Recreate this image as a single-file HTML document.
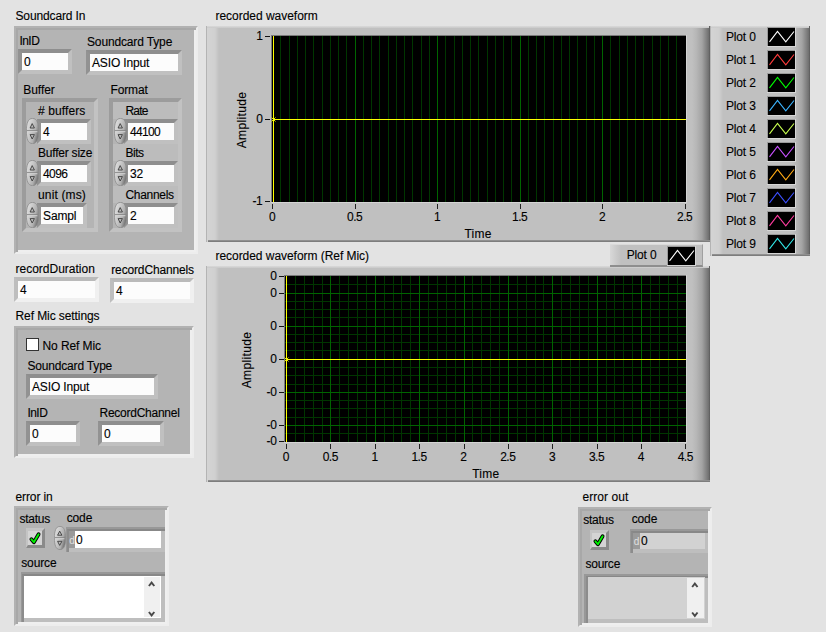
<!DOCTYPE html>
<html><head><meta charset="utf-8"><title>Soundcard In</title><style>
html,body{margin:0;padding:0}
body{width:826px;height:632px;background:#e3e3e3;position:relative;overflow:hidden;
 font-family:"Liberation Sans",sans-serif;font-size:12px;color:#000;-webkit-text-stroke:0.12px currentColor}
.a{position:absolute}
.l{position:absolute;white-space:pre;line-height:14px;height:14px}
.cl{position:absolute;box-sizing:border-box;background:#b4b4b4;border:2px solid;border-color:#b2b2b2 #ededed #ededed #b2b2b2;box-shadow:inset 2px 2px 0 #a8a8a8,inset -2px -2px 0 #efefef}
.cn{position:absolute;box-sizing:border-box;background:#b4b4b4;border:4px solid;border-color:#9c9c9c #c2c2c2 #c2c2c2 #9c9c9c}
.f{position:absolute;box-sizing:content-box;background:#fcfcfc;border:4px solid;border-color:#8e8e8e #c0c0c0 #c0c0c0 #929292;
 padding-left:2px;white-space:pre;overflow:hidden}
.f span{position:relative;top:1px}
.fo{border-color:#bababa #f0f0f0 #f0f0f0 #bebebe}
.lb{background:#bcbcbc}
.rx{position:absolute;background:#9a9a9a;color:#e0e0e0;font-size:10px;text-align:center;-webkit-text-stroke:0}
svg{position:absolute}
</style></head>
<body>
<div class="l " style="left:15.5px;top:9px;letter-spacing:-0.135px;">Soundcard In</div>
<div class="cl" style="left:14px;top:26px;width:184px;height:228px"></div>
<div class="l " style="left:19.5px;top:34px;letter-spacing:-0.569px;">InID</div>
<div class="f " style="left:18px;top:49px;width:44px;height:17px;line-height:17px;"><span>0</span></div>
<div class="l " style="left:87px;top:35px;letter-spacing:-0.144px;">Soundcard Type</div>
<div class="f " style="left:86px;top:50px;width:86px;height:17px;line-height:17px;letter-spacing:-0.15px;"><span>ASIO Input</span></div>
<div class="l " style="left:23.25px;top:83px;letter-spacing:-0.050px;">Buffer</div>
<div class="l " style="left:110.5px;top:83px;letter-spacing:-0.141px;">Format</div>
<div class="cn" style="left:22px;top:98px;width:76px;height:134px"></div>
<div class="cn" style="left:109px;top:98px;width:73px;height:134px"></div>
<div class="a lb" style="left:113px;top:102px;width:65px;height:17px"></div>
<div class="a lb" style="left:113px;top:144px;width:65px;height:17px"></div>
<div class="a lb" style="left:113px;top:186px;width:65px;height:17px"></div>
<div class="l " style="left:38px;top:104px;letter-spacing:0.103px;"># buffers</div>
<div class="l " style="left:38px;top:146px;letter-spacing:-0.217px;">Buffer size</div>
<div class="l " style="left:38px;top:188px;letter-spacing:0.141px;">unit (ms)</div>
<div class="l " style="left:125.5px;top:104px;letter-spacing:-0.849px;">Rate</div>
<div class="l " style="left:125.5px;top:146px;letter-spacing:-0.485px;">Bits</div>
<div class="l " style="left:125.5px;top:188px;letter-spacing:-0.307px;">Channels</div>
<div class="f " style="left:37px;top:119px;width:44px;height:17px;line-height:17px;"><span>4</span></div>
<div class="f " style="left:124px;top:119px;width:44px;height:17px;line-height:17px;letter-spacing:-0.7px;"><span>44100</span></div>
<svg style="left:25.6px;top:117.9px" width="13" height="26" viewBox="0 0 13 26">
<defs><linearGradient id="sg21" x1="0" y1="0.25" x2="1" y2="0.75"><stop offset="0" stop-color="#dedede"/><stop offset="0.35" stop-color="#cacaca"/><stop offset="0.68" stop-color="#b0b0b0"/><stop offset="0.9" stop-color="#7c7c7c"/><stop offset="1" stop-color="#5a5a5a"/></linearGradient></defs>
<path d="M6.5 0.4 C10.92 0.4 12.6 5.20 12.6 13.00 C12.6 20.80 10.92 25.6 6.5 25.6 C2.08 25.6 0.4 20.80 0.4 13.00 C0.4 5.20 2.08 0.4 6.5 0.4Z" fill="url(#sg21)" stroke="#8c8c8c" stroke-width="0.8"/>
<path d="M0.8 12.7 H12.2" stroke="#868686" stroke-width="1"/>
<path d="M1 13.7 H11.4" stroke="#d8d8d8" stroke-width="0.9"/>
<path d="M4.1 10.00 L6.2 5.60 L8.4 10.00 Z" fill="#bcbcbc" stroke="#3c3c3c" stroke-width="0.9"/>
<path d="M4.1 16.60 L6.2 21.00 L8.4 16.60 Z" fill="#bcbcbc" stroke="#3c3c3c" stroke-width="0.9"/>
</svg>
<svg style="left:113.6px;top:117.9px" width="13" height="26" viewBox="0 0 13 26">
<defs><linearGradient id="sg22" x1="0" y1="0.25" x2="1" y2="0.75"><stop offset="0" stop-color="#dedede"/><stop offset="0.35" stop-color="#cacaca"/><stop offset="0.68" stop-color="#b0b0b0"/><stop offset="0.9" stop-color="#7c7c7c"/><stop offset="1" stop-color="#5a5a5a"/></linearGradient></defs>
<path d="M6.5 0.4 C10.92 0.4 12.6 5.20 12.6 13.00 C12.6 20.80 10.92 25.6 6.5 25.6 C2.08 25.6 0.4 20.80 0.4 13.00 C0.4 5.20 2.08 0.4 6.5 0.4Z" fill="url(#sg22)" stroke="#8c8c8c" stroke-width="0.8"/>
<path d="M0.8 12.7 H12.2" stroke="#868686" stroke-width="1"/>
<path d="M1 13.7 H11.4" stroke="#d8d8d8" stroke-width="0.9"/>
<path d="M4.1 10.00 L6.2 5.60 L8.4 10.00 Z" fill="#bcbcbc" stroke="#3c3c3c" stroke-width="0.9"/>
<path d="M4.1 16.60 L6.2 21.00 L8.4 16.60 Z" fill="#bcbcbc" stroke="#3c3c3c" stroke-width="0.9"/>
</svg>
<div class="f " style="left:37px;top:161px;width:44px;height:17px;line-height:17px;letter-spacing:-0.55px;"><span>4096</span></div>
<div class="f " style="left:124px;top:161px;width:44px;height:17px;line-height:17px;letter-spacing:-0.1px;"><span>32</span></div>
<svg style="left:25.6px;top:159.9px" width="13" height="26" viewBox="0 0 13 26">
<defs><linearGradient id="sg25" x1="0" y1="0.25" x2="1" y2="0.75"><stop offset="0" stop-color="#dedede"/><stop offset="0.35" stop-color="#cacaca"/><stop offset="0.68" stop-color="#b0b0b0"/><stop offset="0.9" stop-color="#7c7c7c"/><stop offset="1" stop-color="#5a5a5a"/></linearGradient></defs>
<path d="M6.5 0.4 C10.92 0.4 12.6 5.20 12.6 13.00 C12.6 20.80 10.92 25.6 6.5 25.6 C2.08 25.6 0.4 20.80 0.4 13.00 C0.4 5.20 2.08 0.4 6.5 0.4Z" fill="url(#sg25)" stroke="#8c8c8c" stroke-width="0.8"/>
<path d="M0.8 12.7 H12.2" stroke="#868686" stroke-width="1"/>
<path d="M1 13.7 H11.4" stroke="#d8d8d8" stroke-width="0.9"/>
<path d="M4.1 10.00 L6.2 5.60 L8.4 10.00 Z" fill="#bcbcbc" stroke="#3c3c3c" stroke-width="0.9"/>
<path d="M4.1 16.60 L6.2 21.00 L8.4 16.60 Z" fill="#bcbcbc" stroke="#3c3c3c" stroke-width="0.9"/>
</svg>
<svg style="left:113.6px;top:159.9px" width="13" height="26" viewBox="0 0 13 26">
<defs><linearGradient id="sg26" x1="0" y1="0.25" x2="1" y2="0.75"><stop offset="0" stop-color="#dedede"/><stop offset="0.35" stop-color="#cacaca"/><stop offset="0.68" stop-color="#b0b0b0"/><stop offset="0.9" stop-color="#7c7c7c"/><stop offset="1" stop-color="#5a5a5a"/></linearGradient></defs>
<path d="M6.5 0.4 C10.92 0.4 12.6 5.20 12.6 13.00 C12.6 20.80 10.92 25.6 6.5 25.6 C2.08 25.6 0.4 20.80 0.4 13.00 C0.4 5.20 2.08 0.4 6.5 0.4Z" fill="url(#sg26)" stroke="#8c8c8c" stroke-width="0.8"/>
<path d="M0.8 12.7 H12.2" stroke="#868686" stroke-width="1"/>
<path d="M1 13.7 H11.4" stroke="#d8d8d8" stroke-width="0.9"/>
<path d="M4.1 10.00 L6.2 5.60 L8.4 10.00 Z" fill="#bcbcbc" stroke="#3c3c3c" stroke-width="0.9"/>
<path d="M4.1 16.60 L6.2 21.00 L8.4 16.60 Z" fill="#bcbcbc" stroke="#3c3c3c" stroke-width="0.9"/>
</svg>
<div class="f " style="left:37px;top:203px;width:40px;height:17px;line-height:17px;letter-spacing:-0.12px;"><span>Sampl</span></div>
<div class="f " style="left:124px;top:203px;width:44px;height:17px;line-height:17px;"><span>2</span></div>
<svg style="left:25.6px;top:201.9px" width="13" height="26" viewBox="0 0 13 26">
<defs><linearGradient id="sg29" x1="0" y1="0.25" x2="1" y2="0.75"><stop offset="0" stop-color="#dedede"/><stop offset="0.35" stop-color="#cacaca"/><stop offset="0.68" stop-color="#b0b0b0"/><stop offset="0.9" stop-color="#7c7c7c"/><stop offset="1" stop-color="#5a5a5a"/></linearGradient></defs>
<path d="M6.5 0.4 C10.92 0.4 12.6 5.20 12.6 13.00 C12.6 20.80 10.92 25.6 6.5 25.6 C2.08 25.6 0.4 20.80 0.4 13.00 C0.4 5.20 2.08 0.4 6.5 0.4Z" fill="url(#sg29)" stroke="#8c8c8c" stroke-width="0.8"/>
<path d="M0.8 12.7 H12.2" stroke="#868686" stroke-width="1"/>
<path d="M1 13.7 H11.4" stroke="#d8d8d8" stroke-width="0.9"/>
<path d="M4.1 10.00 L6.2 5.60 L8.4 10.00 Z" fill="#bcbcbc" stroke="#3c3c3c" stroke-width="0.9"/>
<path d="M4.1 16.60 L6.2 21.00 L8.4 16.60 Z" fill="#bcbcbc" stroke="#3c3c3c" stroke-width="0.9"/>
</svg>
<svg style="left:113.6px;top:201.9px" width="13" height="26" viewBox="0 0 13 26">
<defs><linearGradient id="sg30" x1="0" y1="0.25" x2="1" y2="0.75"><stop offset="0" stop-color="#dedede"/><stop offset="0.35" stop-color="#cacaca"/><stop offset="0.68" stop-color="#b0b0b0"/><stop offset="0.9" stop-color="#7c7c7c"/><stop offset="1" stop-color="#5a5a5a"/></linearGradient></defs>
<path d="M6.5 0.4 C10.92 0.4 12.6 5.20 12.6 13.00 C12.6 20.80 10.92 25.6 6.5 25.6 C2.08 25.6 0.4 20.80 0.4 13.00 C0.4 5.20 2.08 0.4 6.5 0.4Z" fill="url(#sg30)" stroke="#8c8c8c" stroke-width="0.8"/>
<path d="M0.8 12.7 H12.2" stroke="#868686" stroke-width="1"/>
<path d="M1 13.7 H11.4" stroke="#d8d8d8" stroke-width="0.9"/>
<path d="M4.1 10.00 L6.2 5.60 L8.4 10.00 Z" fill="#bcbcbc" stroke="#3c3c3c" stroke-width="0.9"/>
<path d="M4.1 16.60 L6.2 21.00 L8.4 16.60 Z" fill="#bcbcbc" stroke="#3c3c3c" stroke-width="0.9"/>
</svg>
<div class="l " style="left:15.5px;top:262px;letter-spacing:-0.005px;">recordDuration</div>
<div class="f fo" style="left:14px;top:277px;width:75px;height:17px;line-height:17px;"><span>4</span></div>
<div class="l " style="left:111.25px;top:263px;letter-spacing:-0.147px;">recordChannels</div>
<div class="f fo" style="left:110px;top:278px;width:74px;height:17px;line-height:17px;"><span>4</span></div>
<div class="l " style="left:15.5px;top:309px;letter-spacing:-0.087px;">Ref Mic settings</div>
<div class="cl" style="left:14px;top:326px;width:180px;height:132px"></div>
<div class="a" style="left:26px;top:338px;width:11px;height:11px;background:#fff;border:1px solid #333"></div>
<div class="l " style="left:42.5px;top:339px;letter-spacing:-0.088px;">No Ref Mic</div>
<div class="l " style="left:27.5px;top:359px;letter-spacing:-0.183px;">Soundcard Type</div>
<div class="f " style="left:26px;top:374px;width:122px;height:17px;line-height:17px;letter-spacing:-0.15px;"><span>ASIO Input</span></div>
<div class="l " style="left:27.5px;top:406px;letter-spacing:-0.569px;">InID</div>
<div class="f " style="left:26px;top:421px;width:44px;height:17px;line-height:17px;"><span>0</span></div>
<div class="l " style="left:99.5px;top:406px;letter-spacing:-0.257px;">RecordChannel</div>
<div class="f " style="left:98px;top:421px;width:56px;height:17px;line-height:17px;"><span>0</span></div>
<div class="l " style="left:15.5px;top:489.5px;letter-spacing:-0.102px;">error in</div>
<div class="cl" style="left:14px;top:506px;width:155px;height:120px"></div>
<div class="l " style="left:19.5px;top:512px;letter-spacing:-0.243px;">status</div>
<div class="l " style="left:66.75px;top:511px;letter-spacing:-0.157px;">code</div>
<div class="a" style="left:26px;top:528px;width:14px;height:14px;background:#d4d4d4;border-style:solid;border-width:3px 3px 3px 2px;border-color:#c4c4c4 #8a8a8a #8a8a8a #c4c4c4"></div>
<svg style="left:26px;top:528px" width="19" height="20" viewBox="0 0 19 20"><path d="M5.4 11.3 L7.9 14.2 L12.6 6.2" fill="none" stroke="#000" stroke-width="3.8" stroke-linejoin="round" stroke-linecap="round"/><path d="M5.4 11.3 L7.9 14.2 L12.6 6.2" fill="none" stroke="#00f400" stroke-width="1.8" stroke-linejoin="round" stroke-linecap="round"/></svg>
<svg style="left:54.1px;top:525.9px" width="12" height="24" viewBox="0 0 12 24">
<defs><linearGradient id="sg50" x1="0" y1="0.25" x2="1" y2="0.75"><stop offset="0" stop-color="#dedede"/><stop offset="0.35" stop-color="#cacaca"/><stop offset="0.68" stop-color="#b0b0b0"/><stop offset="0.9" stop-color="#7c7c7c"/><stop offset="1" stop-color="#5a5a5a"/></linearGradient></defs>
<path d="M6.0 0.4 C10.08 0.4 11.6 4.80 11.6 12.00 C11.6 19.20 10.08 23.6 6.0 23.6 C1.92 23.6 0.4 19.20 0.4 12.00 C0.4 4.80 1.92 0.4 6.0 0.4Z" fill="url(#sg50)" stroke="#8c8c8c" stroke-width="0.8"/>
<path d="M0.8 11.7 H11.2" stroke="#868686" stroke-width="1"/>
<path d="M1 12.7 H10.4" stroke="#d8d8d8" stroke-width="0.9"/>
<path d="M3.6 9.23 L5.7 5.17 L7.9 9.23 Z" fill="#bcbcbc" stroke="#3c3c3c" stroke-width="0.9"/>
<path d="M3.6 15.32 L5.7 19.38 L7.9 15.32 Z" fill="#bcbcbc" stroke="#3c3c3c" stroke-width="0.9"/>
</svg>
<div class="a" style="left:66px;top:527px;width:99px;height:25px;background:#bebebe;border-top:2px solid #989898;border-left:1px solid #989898;box-sizing:border-box"></div>
<div class="a" style="left:67px;top:529px;width:98px;height:23px;background:#bebebe;border-top:2px solid #888888;border-left:2px solid #8c8c8c;box-sizing:border-box"></div>
<div class="rx" style="left:69px;top:531px;width:6px;height:17px;line-height:19px">d</div>
<div class="a" style="left:75px;top:531px;width:86px;height:17px;background:#fff;line-height:18px;padding-left:1px;box-sizing:border-box">0</div>
<div class="l " style="left:21.25px;top:556px;letter-spacing:-0.143px;">source</div>
<div class="a" style="left:20.5px;top:572px;width:144.5px;height:50px;background:#bebebe;border-top:2px solid #989898;border-left:1.5px solid #989898;box-sizing:border-box"></div>
<div class="a" style="left:22.0px;top:574px;width:143.0px;height:48px;background:#bebebe;border-top:2px solid #888888;border-left:2px solid #8c8c8c;box-sizing:border-box"></div>
<div class="a" style="left:24px;top:576px;width:137px;height:42px;background:#fff"></div>
<div class="a" style="left:144px;top:577px;width:16px;height:40px;background:#f0f0f0"></div>
<svg style="left:144px;top:577px" width="16" height="40" viewBox="0 0 16 40"><path d="M4.8999999999999995 9 L7.6 5.6 L10.3 9" fill="none" stroke="#484848" stroke-width="1.9"/><path d="M4.8999999999999995 35 L7.6 38.4 L10.3 35" fill="none" stroke="#484848" stroke-width="1.9"/></svg>
<div class="l " style="left:582.5px;top:490px;letter-spacing:0.056px;">error out</div>
<div class="cl" style="left:578px;top:506.5px;width:134px;height:120px"></div>
<div class="l " style="left:583.25px;top:513px;letter-spacing:-0.243px;">status</div>
<div class="l " style="left:631.75px;top:512px;letter-spacing:-0.157px;">code</div>
<div class="a" style="left:590px;top:529.5px;width:14px;height:14px;background:#d4d4d4;border-style:solid;border-width:3px 3px 3px 2px;border-color:#c4c4c4 #8a8a8a #8a8a8a #c4c4c4"></div>
<svg style="left:590px;top:529.5px" width="19" height="20" viewBox="0 0 19 20"><path d="M5.4 11.3 L7.9 14.2 L12.6 6.2" fill="none" stroke="#000" stroke-width="3.8" stroke-linejoin="round" stroke-linecap="round"/><path d="M5.4 11.3 L7.9 14.2 L12.6 6.2" fill="none" stroke="#00f400" stroke-width="1.8" stroke-linejoin="round" stroke-linecap="round"/></svg>
<div class="a" style="left:630px;top:528.5px;width:78px;height:24px;background:#bebebe;border-top:2px solid #989898;border-left:1px solid #989898;box-sizing:border-box"></div>
<div class="a" style="left:631px;top:530.5px;width:77px;height:22px;background:#bebebe;border-top:2px solid #888888;border-left:2px solid #8c8c8c;box-sizing:border-box"></div>
<div class="rx" style="left:633px;top:532.5px;width:7px;height:16px;line-height:18px">d</div>
<div class="a" style="left:640px;top:532.5px;width:64.5px;height:16px;background:#d2d2d2;line-height:17px;padding-left:1px;box-sizing:border-box">0</div>
<div class="l " style="left:585.5px;top:556.5px;letter-spacing:-0.243px;">source</div>
<div class="a" style="left:584px;top:573.5px;width:124px;height:49px;background:#bebebe;border-top:2px solid #989898;border-left:2px solid #989898;box-sizing:border-box"></div>
<div class="a" style="left:586px;top:575.5px;width:122px;height:47px;background:#bebebe;border-top:2px solid #888888;border-left:2px solid #8c8c8c;box-sizing:border-box"></div>
<div class="a" style="left:588px;top:577px;width:116.5px;height:41.5px;background:#d2d2d2"></div>
<div class="a" style="left:687px;top:578px;width:16.5px;height:39.5px;background:#f0f0f0"></div>
<svg style="left:687px;top:578px" width="16.5" height="39.5" viewBox="0 0 16.5 39.5"><path d="M5.1499999999999995 9 L7.85 5.6 L10.55 9" fill="none" stroke="#484848" stroke-width="1.9"/><path d="M5.1499999999999995 34.5 L7.85 37.9 L10.55 34.5" fill="none" stroke="#484848" stroke-width="1.9"/></svg>
<div class="l " style="left:215.5px;top:9px;letter-spacing:-0.026px;">recorded waveform</div>
<div class="a" style="left:206px;top:26px;width:504px;height:216px;background:#c0c0c0"></div>
<div class="a" style="left:206px;top:26px;width:14px;height:216px;background:linear-gradient(90deg,#b4b4b4 0,#b4b4b4 1px,#d4d4d4 1px,#d0d0d0 9px,#c0c0c0 13px)"></div>
<div class="a" style="left:692px;top:26px;width:18px;height:216px;background:linear-gradient(90deg,#c0c0c0 0,#b6b6b6 25%,#a4a4a4 55%,#707070 93%,#585858 100%)"></div>
<div class="a" style="left:207px;top:26px;width:502px;height:2px;background:linear-gradient(180deg,#dadada,#c8c8c8)"></div>
<div class="a" style="left:208px;top:240px;width:502px;height:2px;background:linear-gradient(180deg,#989898,#747474)"></div>
<div class="l " style="left:215.5px;top:249px;letter-spacing:-0.045px;">recorded waveform (Ref Mic)</div>
<div class="a" style="left:206px;top:266px;width:504px;height:216px;background:#c0c0c0"></div>
<div class="a" style="left:206px;top:266px;width:14px;height:216px;background:linear-gradient(90deg,#b4b4b4 0,#b4b4b4 1px,#d4d4d4 1px,#d0d0d0 9px,#c0c0c0 13px)"></div>
<div class="a" style="left:692px;top:266px;width:18px;height:216px;background:linear-gradient(90deg,#c0c0c0 0,#b6b6b6 25%,#a4a4a4 55%,#707070 93%,#585858 100%)"></div>
<div class="a" style="left:207px;top:266px;width:502px;height:2px;background:linear-gradient(180deg,#dadada,#c8c8c8)"></div>
<div class="a" style="left:208px;top:480px;width:502px;height:2px;background:linear-gradient(180deg,#989898,#747474)"></div>
<svg style="left:271px;top:35px;overflow:hidden" width="416" height="168" viewBox="-1 -1 416 168" shape-rendering="crispEdges"><rect x="-1" y="-1" width="416" height="168" fill="#d4d4d4"/><rect x="-1" y="-1" width="415" height="167" fill="#7a7a7a"/><rect x="0" y="0" width="414" height="166" fill="#000"/><rect x="8" y="0" width="1" height="166" fill="#003600"/><rect x="17" y="0" width="1" height="166" fill="#003600"/><rect x="25" y="0" width="1" height="166" fill="#003600"/><rect x="33" y="0" width="1" height="166" fill="#003600"/><rect x="41" y="0" width="1" height="166" fill="#003600"/><rect x="50" y="0" width="1" height="166" fill="#003600"/><rect x="58" y="0" width="1" height="166" fill="#003600"/><rect x="66" y="0" width="1" height="166" fill="#003600"/><rect x="74" y="0" width="1" height="166" fill="#003600"/><rect x="83" y="0" width="1" height="166" fill="#003600"/><rect x="91" y="0" width="1" height="166" fill="#003600"/><rect x="99" y="0" width="1" height="166" fill="#003600"/><rect x="107" y="0" width="1" height="166" fill="#003600"/><rect x="116" y="0" width="1" height="166" fill="#003600"/><rect x="124" y="0" width="1" height="166" fill="#003600"/><rect x="132" y="0" width="1" height="166" fill="#003600"/><rect x="140" y="0" width="1" height="166" fill="#003600"/><rect x="149" y="0" width="1" height="166" fill="#003600"/><rect x="157" y="0" width="1" height="166" fill="#003600"/><rect x="165" y="0" width="1" height="166" fill="#003600"/><rect x="173" y="0" width="1" height="166" fill="#003600"/><rect x="182" y="0" width="1" height="166" fill="#003600"/><rect x="190" y="0" width="1" height="166" fill="#003600"/><rect x="198" y="0" width="1" height="166" fill="#003600"/><rect x="206" y="0" width="1" height="166" fill="#003600"/><rect x="215" y="0" width="1" height="166" fill="#003600"/><rect x="223" y="0" width="1" height="166" fill="#003600"/><rect x="231" y="0" width="1" height="166" fill="#003600"/><rect x="239" y="0" width="1" height="166" fill="#003600"/><rect x="248" y="0" width="1" height="166" fill="#003600"/><rect x="256" y="0" width="1" height="166" fill="#003600"/><rect x="264" y="0" width="1" height="166" fill="#003600"/><rect x="272" y="0" width="1" height="166" fill="#003600"/><rect x="281" y="0" width="1" height="166" fill="#003600"/><rect x="289" y="0" width="1" height="166" fill="#003600"/><rect x="297" y="0" width="1" height="166" fill="#003600"/><rect x="305" y="0" width="1" height="166" fill="#003600"/><rect x="314" y="0" width="1" height="166" fill="#003600"/><rect x="322" y="0" width="1" height="166" fill="#003600"/><rect x="330" y="0" width="1" height="166" fill="#003600"/><rect x="338" y="0" width="1" height="166" fill="#003600"/><rect x="347" y="0" width="1" height="166" fill="#003600"/><rect x="355" y="0" width="1" height="166" fill="#003600"/><rect x="363" y="0" width="1" height="166" fill="#003600"/><rect x="371" y="0" width="1" height="166" fill="#003600"/><rect x="380" y="0" width="1" height="166" fill="#003600"/><rect x="388" y="0" width="1" height="166" fill="#003600"/><rect x="396" y="0" width="1" height="166" fill="#003600"/><rect x="404" y="0" width="1" height="166" fill="#003600"/><rect x="83" y="0" width="1" height="166" fill="#006400"/><rect x="165" y="0" width="1" height="166" fill="#006400"/><rect x="248" y="0" width="1" height="166" fill="#006400"/><rect x="330" y="0" width="1" height="166" fill="#006400"/><rect x="1" y="0" width="1" height="166" fill="#ffff00"/><rect x="1" y="83" width="413" height="1" fill="#ffff00"/><path d="M-0.5 81.5 L3.5 85.5 M-0.5 85.5 L3.5 81.5" stroke="#e8e800" stroke-width="1" shape-rendering="auto"/></svg>
<svg style="left:284px;top:275px;overflow:hidden" width="403" height="168" viewBox="-1 -1 403 168" shape-rendering="crispEdges"><rect x="-1" y="-1" width="403" height="168" fill="#d4d4d4"/><rect x="-1" y="-1" width="402" height="167" fill="#7a7a7a"/><rect x="0" y="0" width="401" height="166" fill="#000"/><rect x="10" y="0" width="1" height="166" fill="#003600"/><rect x="19" y="0" width="1" height="166" fill="#003600"/><rect x="28" y="0" width="1" height="166" fill="#003600"/><rect x="37" y="0" width="1" height="166" fill="#003600"/><rect x="45" y="0" width="1" height="166" fill="#003600"/><rect x="54" y="0" width="1" height="166" fill="#003600"/><rect x="63" y="0" width="1" height="166" fill="#003600"/><rect x="72" y="0" width="1" height="166" fill="#003600"/><rect x="81" y="0" width="1" height="166" fill="#003600"/><rect x="90" y="0" width="1" height="166" fill="#003600"/><rect x="99" y="0" width="1" height="166" fill="#003600"/><rect x="108" y="0" width="1" height="166" fill="#003600"/><rect x="116" y="0" width="1" height="166" fill="#003600"/><rect x="125" y="0" width="1" height="166" fill="#003600"/><rect x="134" y="0" width="1" height="166" fill="#003600"/><rect x="143" y="0" width="1" height="166" fill="#003600"/><rect x="152" y="0" width="1" height="166" fill="#003600"/><rect x="161" y="0" width="1" height="166" fill="#003600"/><rect x="170" y="0" width="1" height="166" fill="#003600"/><rect x="179" y="0" width="1" height="166" fill="#003600"/><rect x="187" y="0" width="1" height="166" fill="#003600"/><rect x="196" y="0" width="1" height="166" fill="#003600"/><rect x="205" y="0" width="1" height="166" fill="#003600"/><rect x="214" y="0" width="1" height="166" fill="#003600"/><rect x="223" y="0" width="1" height="166" fill="#003600"/><rect x="232" y="0" width="1" height="166" fill="#003600"/><rect x="241" y="0" width="1" height="166" fill="#003600"/><rect x="250" y="0" width="1" height="166" fill="#003600"/><rect x="258" y="0" width="1" height="166" fill="#003600"/><rect x="267" y="0" width="1" height="166" fill="#003600"/><rect x="276" y="0" width="1" height="166" fill="#003600"/><rect x="285" y="0" width="1" height="166" fill="#003600"/><rect x="294" y="0" width="1" height="166" fill="#003600"/><rect x="303" y="0" width="1" height="166" fill="#003600"/><rect x="312" y="0" width="1" height="166" fill="#003600"/><rect x="321" y="0" width="1" height="166" fill="#003600"/><rect x="329" y="0" width="1" height="166" fill="#003600"/><rect x="338" y="0" width="1" height="166" fill="#003600"/><rect x="347" y="0" width="1" height="166" fill="#003600"/><rect x="356" y="0" width="1" height="166" fill="#003600"/><rect x="365" y="0" width="1" height="166" fill="#003600"/><rect x="374" y="0" width="1" height="166" fill="#003600"/><rect x="383" y="0" width="1" height="166" fill="#003600"/><rect x="392" y="0" width="1" height="166" fill="#003600"/><rect x="0" y="8" width="401" height="1" fill="#003600"/><rect x="0" y="17" width="401" height="1" fill="#003600"/><rect x="0" y="25" width="401" height="1" fill="#003600"/><rect x="0" y="33" width="401" height="1" fill="#003600"/><rect x="0" y="41" width="401" height="1" fill="#003600"/><rect x="0" y="50" width="401" height="1" fill="#003600"/><rect x="0" y="58" width="401" height="1" fill="#003600"/><rect x="0" y="66" width="401" height="1" fill="#003600"/><rect x="0" y="74" width="401" height="1" fill="#003600"/><rect x="0" y="83" width="401" height="1" fill="#003600"/><rect x="0" y="91" width="401" height="1" fill="#003600"/><rect x="0" y="99" width="401" height="1" fill="#003600"/><rect x="0" y="108" width="401" height="1" fill="#003600"/><rect x="0" y="116" width="401" height="1" fill="#003600"/><rect x="0" y="124" width="401" height="1" fill="#003600"/><rect x="0" y="132" width="401" height="1" fill="#003600"/><rect x="0" y="141" width="401" height="1" fill="#003600"/><rect x="0" y="149" width="401" height="1" fill="#003600"/><rect x="0" y="157" width="401" height="1" fill="#003600"/><rect x="45" y="0" width="1" height="166" fill="#006400"/><rect x="90" y="0" width="1" height="166" fill="#006400"/><rect x="134" y="0" width="1" height="166" fill="#006400"/><rect x="179" y="0" width="1" height="166" fill="#006400"/><rect x="223" y="0" width="1" height="166" fill="#006400"/><rect x="267" y="0" width="1" height="166" fill="#006400"/><rect x="312" y="0" width="1" height="166" fill="#006400"/><rect x="356" y="0" width="1" height="166" fill="#006400"/><rect x="0" y="17" width="401" height="1" fill="#006400"/><rect x="0" y="50" width="401" height="1" fill="#006400"/><rect x="0" y="116" width="401" height="1" fill="#006400"/><rect x="0" y="149" width="401" height="1" fill="#006400"/><rect x="1" y="0" width="1" height="166" fill="#ffff00"/><rect x="1" y="83" width="400" height="1" fill="#ffff00"/><path d="M-0.5 81.5 L3.5 85.5 M-0.5 85.5 L3.5 81.5" stroke="#e8e800" stroke-width="1" shape-rendering="auto"/></svg>
<div class="l" style="left:222.5px;width:40px;text-align:right;letter-spacing:-0.3px;top:29px">1</div>
<div class="a" style="left:265.0px;top:36px;width:5px;height:1px;background:#111"></div>
<div class="l" style="left:222.5px;width:40px;text-align:right;letter-spacing:-0.3px;top:112px">0</div>
<div class="a" style="left:265.0px;top:119px;width:5px;height:1px;background:#111"></div>
<div class="l" style="left:222.5px;width:40px;text-align:right;letter-spacing:-0.3px;top:194px">-1</div>
<div class="a" style="left:265.0px;top:201px;width:5px;height:1px;background:#111"></div>
<div class="a" style="left:272px;top:204px;width:1px;height:5px;background:#222"></div>
<div class="l" style="left:252.15px;width:40px;text-align:center;letter-spacing:-0.55px;top:210px">0</div>
<div class="a" style="left:355px;top:204px;width:1px;height:5px;background:#222"></div>
<div class="l" style="left:334.65px;width:40px;text-align:center;letter-spacing:-0.55px;top:210px">0.5</div>
<div class="a" style="left:437px;top:204px;width:1px;height:5px;background:#222"></div>
<div class="l" style="left:417.15px;width:40px;text-align:center;letter-spacing:-0.55px;top:210px">1</div>
<div class="a" style="left:520px;top:204px;width:1px;height:5px;background:#222"></div>
<div class="l" style="left:499.65px;width:40px;text-align:center;letter-spacing:-0.55px;top:210px">1.5</div>
<div class="a" style="left:602px;top:204px;width:1px;height:5px;background:#222"></div>
<div class="l" style="left:582.15px;width:40px;text-align:center;letter-spacing:-0.55px;top:210px">2</div>
<div class="a" style="left:685px;top:204px;width:1px;height:5px;background:#222"></div>
<div class="l" style="left:664.65px;width:40px;text-align:center;letter-spacing:-0.55px;top:210px">2.5</div>
<div class="l " style="left:464.5px;top:227.4px;letter-spacing:0.193px;">Time</div>
<div class="l" style="left:212.5px;top:112.5px;width:58px;text-align:center;letter-spacing:0.35px;transform:rotate(-90deg);transform-origin:50% 50%">Amplitude</div>
<div class="l" style="left:236.60000000000002px;width:40px;text-align:right;letter-spacing:-0.3px;top:269px">0</div>
<div class="a" style="left:279.1px;top:276px;width:5px;height:1px;background:#111"></div>
<div class="l" style="left:236.60000000000002px;width:40px;text-align:right;letter-spacing:-0.3px;top:286px">0</div>
<div class="a" style="left:279.1px;top:293px;width:5px;height:1px;background:#111"></div>
<div class="l" style="left:236.60000000000002px;width:40px;text-align:right;letter-spacing:-0.3px;top:319px">0</div>
<div class="a" style="left:279.1px;top:326px;width:5px;height:1px;background:#111"></div>
<div class="l" style="left:236.60000000000002px;width:40px;text-align:right;letter-spacing:-0.3px;top:352px">0</div>
<div class="a" style="left:279.1px;top:359px;width:5px;height:1px;background:#111"></div>
<div class="l" style="left:236.60000000000002px;width:40px;text-align:right;letter-spacing:-0.3px;top:385px">-0</div>
<div class="a" style="left:279.1px;top:392px;width:5px;height:1px;background:#111"></div>
<div class="l" style="left:236.60000000000002px;width:40px;text-align:right;letter-spacing:-0.3px;top:418px">-0</div>
<div class="a" style="left:279.1px;top:425px;width:5px;height:1px;background:#111"></div>
<div class="l" style="left:236.60000000000002px;width:40px;text-align:right;letter-spacing:-0.3px;top:434px">-0</div>
<div class="a" style="left:279.1px;top:441px;width:5px;height:1px;background:#111"></div>
<div class="a" style="left:286px;top:444px;width:1px;height:5px;background:#222"></div>
<div class="l" style="left:265.9px;width:40px;text-align:center;letter-spacing:-0.55px;top:450px">0</div>
<div class="a" style="left:330px;top:444px;width:1px;height:5px;background:#222"></div>
<div class="l" style="left:310.275px;width:40px;text-align:center;letter-spacing:-0.55px;top:450px">0.5</div>
<div class="a" style="left:375px;top:444px;width:1px;height:5px;background:#222"></div>
<div class="l" style="left:354.65px;width:40px;text-align:center;letter-spacing:-0.55px;top:450px">1</div>
<div class="a" style="left:419px;top:444px;width:1px;height:5px;background:#222"></div>
<div class="l" style="left:399.025px;width:40px;text-align:center;letter-spacing:-0.55px;top:450px">1.5</div>
<div class="a" style="left:464px;top:444px;width:1px;height:5px;background:#222"></div>
<div class="l" style="left:443.4px;width:40px;text-align:center;letter-spacing:-0.55px;top:450px">2</div>
<div class="a" style="left:508px;top:444px;width:1px;height:5px;background:#222"></div>
<div class="l" style="left:487.775px;width:40px;text-align:center;letter-spacing:-0.55px;top:450px">2.5</div>
<div class="a" style="left:552px;top:444px;width:1px;height:5px;background:#222"></div>
<div class="l" style="left:532.15px;width:40px;text-align:center;letter-spacing:-0.55px;top:450px">3</div>
<div class="a" style="left:597px;top:444px;width:1px;height:5px;background:#222"></div>
<div class="l" style="left:576.525px;width:40px;text-align:center;letter-spacing:-0.55px;top:450px">3.5</div>
<div class="a" style="left:641px;top:444px;width:1px;height:5px;background:#222"></div>
<div class="l" style="left:620.9px;width:40px;text-align:center;letter-spacing:-0.55px;top:450px">4</div>
<div class="a" style="left:685px;top:444px;width:1px;height:5px;background:#222"></div>
<div class="l" style="left:665.275px;width:40px;text-align:center;letter-spacing:-0.55px;top:450px">4.5</div>
<div class="l " style="left:472.3px;top:467px;letter-spacing:0.193px;">Time</div>
<div class="l" style="left:217.5px;top:352.5px;width:58px;text-align:center;letter-spacing:0.35px;transform:rotate(-90deg);transform-origin:50% 50%">Amplitude</div>
<div class="a" style="left:710px;top:26px;width:100px;height:230px;background:#c0c0c0"></div>
<div class="a" style="left:710px;top:26px;width:14px;height:230px;background:linear-gradient(90deg,#b4b4b4 0,#b4b4b4 1px,#d4d4d4 1px,#d0d0d0 9px,#c0c0c0 13px)"></div>
<div class="a" style="left:792px;top:26px;width:18px;height:230px;background:linear-gradient(90deg,#c0c0c0 0,#b6b6b6 25%,#a4a4a4 55%,#707070 93%,#585858 100%)"></div>
<div class="a" style="left:711px;top:26px;width:98px;height:2px;background:linear-gradient(180deg,#dadada,#c8c8c8)"></div>
<div class="a" style="left:712px;top:254px;width:98px;height:2px;background:linear-gradient(180deg,#989898,#747474)"></div>
<div class="l " style="left:726px;top:30px;letter-spacing:-0.177px;">Plot 0</div>
<svg style="left:767px;top:27px" width="29" height="20" viewBox="-1 -1 29 20"><rect x="-1" y="-1" width="29" height="20" fill="#d6d6d6"/><rect x="-1" y="-1" width="28" height="19" fill="#9a9a9a"/><rect x="0" y="0" width="27" height="18" fill="#000"/><path d="M1.5 13.8 L9.5 3.5 L17.8 13.8 L26 3.5" fill="none" stroke="#ffffff" stroke-width="1.1"/></svg>
<div class="l " style="left:726px;top:53px;letter-spacing:-0.177px;">Plot 1</div>
<svg style="left:767px;top:50px" width="29" height="20" viewBox="-1 -1 29 20"><rect x="-1" y="-1" width="29" height="20" fill="#d6d6d6"/><rect x="-1" y="-1" width="28" height="19" fill="#9a9a9a"/><rect x="0" y="0" width="27" height="18" fill="#000"/><path d="M1.5 13.8 L9.5 3.5 L17.8 13.8 L26 3.5" fill="none" stroke="#ff3c3c" stroke-width="1.1"/></svg>
<div class="l " style="left:726px;top:76px;letter-spacing:-0.177px;">Plot 2</div>
<svg style="left:767px;top:73px" width="29" height="20" viewBox="-1 -1 29 20"><rect x="-1" y="-1" width="29" height="20" fill="#d6d6d6"/><rect x="-1" y="-1" width="28" height="19" fill="#9a9a9a"/><rect x="0" y="0" width="27" height="18" fill="#000"/><path d="M1.5 13.8 L9.5 3.5 L17.8 13.8 L26 3.5" fill="none" stroke="#00ff00" stroke-width="1.1"/></svg>
<div class="l " style="left:726px;top:99px;letter-spacing:-0.177px;">Plot 3</div>
<svg style="left:767px;top:96px" width="29" height="20" viewBox="-1 -1 29 20"><rect x="-1" y="-1" width="29" height="20" fill="#d6d6d6"/><rect x="-1" y="-1" width="28" height="19" fill="#9a9a9a"/><rect x="0" y="0" width="27" height="18" fill="#000"/><path d="M1.5 13.8 L9.5 3.5 L17.8 13.8 L26 3.5" fill="none" stroke="#3cb4ff" stroke-width="1.1"/></svg>
<div class="l " style="left:726px;top:122px;letter-spacing:-0.177px;">Plot 4</div>
<svg style="left:767px;top:119px" width="29" height="20" viewBox="-1 -1 29 20"><rect x="-1" y="-1" width="29" height="20" fill="#d6d6d6"/><rect x="-1" y="-1" width="28" height="19" fill="#9a9a9a"/><rect x="0" y="0" width="27" height="18" fill="#000"/><path d="M1.5 13.8 L9.5 3.5 L17.8 13.8 L26 3.5" fill="none" stroke="#c8ff50" stroke-width="1.1"/></svg>
<div class="l " style="left:726px;top:145px;letter-spacing:-0.177px;">Plot 5</div>
<svg style="left:767px;top:142px" width="29" height="20" viewBox="-1 -1 29 20"><rect x="-1" y="-1" width="29" height="20" fill="#d6d6d6"/><rect x="-1" y="-1" width="28" height="19" fill="#9a9a9a"/><rect x="0" y="0" width="27" height="18" fill="#000"/><path d="M1.5 13.8 L9.5 3.5 L17.8 13.8 L26 3.5" fill="none" stroke="#c850ff" stroke-width="1.1"/></svg>
<div class="l " style="left:726px;top:168px;letter-spacing:-0.177px;">Plot 6</div>
<svg style="left:767px;top:165px" width="29" height="20" viewBox="-1 -1 29 20"><rect x="-1" y="-1" width="29" height="20" fill="#d6d6d6"/><rect x="-1" y="-1" width="28" height="19" fill="#9a9a9a"/><rect x="0" y="0" width="27" height="18" fill="#000"/><path d="M1.5 13.8 L9.5 3.5 L17.8 13.8 L26 3.5" fill="none" stroke="#ffaa14" stroke-width="1.1"/></svg>
<div class="l " style="left:726px;top:191px;letter-spacing:-0.177px;">Plot 7</div>
<svg style="left:767px;top:188px" width="29" height="20" viewBox="-1 -1 29 20"><rect x="-1" y="-1" width="29" height="20" fill="#d6d6d6"/><rect x="-1" y="-1" width="28" height="19" fill="#9a9a9a"/><rect x="0" y="0" width="27" height="18" fill="#000"/><path d="M1.5 13.8 L9.5 3.5 L17.8 13.8 L26 3.5" fill="none" stroke="#3c50ff" stroke-width="1.1"/></svg>
<div class="l " style="left:726px;top:214px;letter-spacing:-0.177px;">Plot 8</div>
<svg style="left:767px;top:211px" width="29" height="20" viewBox="-1 -1 29 20"><rect x="-1" y="-1" width="29" height="20" fill="#d6d6d6"/><rect x="-1" y="-1" width="28" height="19" fill="#9a9a9a"/><rect x="0" y="0" width="27" height="18" fill="#000"/><path d="M1.5 13.8 L9.5 3.5 L17.8 13.8 L26 3.5" fill="none" stroke="#ff3ca0" stroke-width="1.1"/></svg>
<div class="l " style="left:726px;top:237px;letter-spacing:-0.177px;">Plot 9</div>
<svg style="left:767px;top:234px" width="29" height="20" viewBox="-1 -1 29 20"><rect x="-1" y="-1" width="29" height="20" fill="#d6d6d6"/><rect x="-1" y="-1" width="28" height="19" fill="#9a9a9a"/><rect x="0" y="0" width="27" height="18" fill="#000"/><path d="M1.5 13.8 L9.5 3.5 L17.8 13.8 L26 3.5" fill="none" stroke="#32e6e6" stroke-width="1.1"/></svg>
<div class="a" style="left:610px;top:244px;width:93px;height:23px;background:linear-gradient(90deg,#d8d8d8 0,#c0c0c0 11px);box-sizing:border-box;border-top:1px solid #dadada;border-bottom:2px solid #8e8e8e;border-right:1px solid #a0a0a0"></div>
<div class="l " style="left:626.75px;top:248px;letter-spacing:-0.177px;">Plot 0</div>
<svg style="left:667px;top:246px" width="29" height="20" viewBox="-1 -1 29 20"><rect x="-1" y="-1" width="29" height="20" fill="#d6d6d6"/><rect x="-1" y="-1" width="28" height="19" fill="#9a9a9a"/><rect x="0" y="0" width="27" height="18" fill="#000"/><path d="M1.5 13.8 L9.5 3.5 L17.8 13.8 L26 3.5" fill="none" stroke="#ffffff" stroke-width="1.1"/></svg>
</body></html>
